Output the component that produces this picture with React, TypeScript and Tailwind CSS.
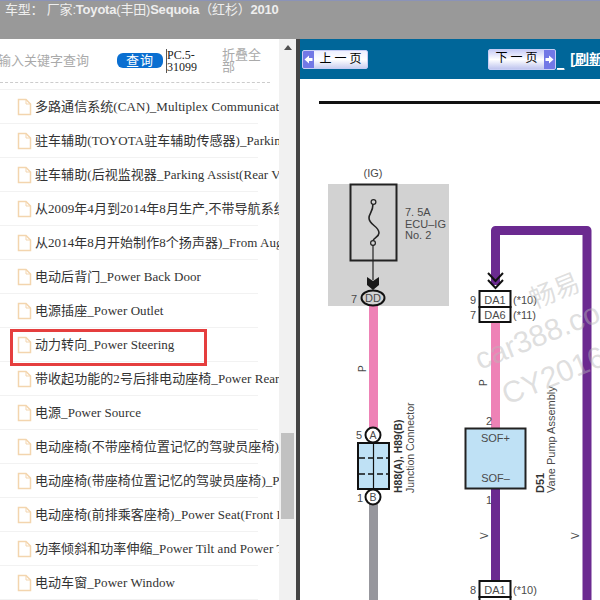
const rows = [
  '多路通信系统(CAN)_Multiplex Communication System',
  '驻车辅助(TOYOTA驻车辅助传感器)_Parking Assist Sensor',
  '驻车辅助(后视监视器_Parking Assist(Rear View Monitor)',
  '从2009年4月到2014年8月生产,不带导航系统的车型',
  '从2014年8月开始制作8个扬声器)_From Aug. 2014',
  '电动后背门_Power Back Door',
  '电源插座_Power Outlet',
  '动力转向_Power Steering',
  '带收起功能的2号后排电动座椅_Power Rear Seat',
  '电源_Power Source',
  '电动座椅(不带座椅位置记忆的驾驶员座椅)_Power Seat',
  '电动座椅(带座椅位置记忆的驾驶员座椅)_Power Seat',
  '电动座椅(前排乘客座椅)_Power Seat(Front Passenger)',
  '功率倾斜和功率伸缩_Power Tilt and Power Telescopic',
  '电动车窗_Power Window',
];

function FileIcon() {
  return (
    <svg width="15" height="18" viewBox="0 0 15 18" className="shrink-0">
      <path d="M1.5 1.5H9L13.5 6V16.5H1.5Z" fill="#fff" stroke="#f3d5ae" strokeWidth="1.5" />
      <path d="M9 1.5V6H13.5" fill="none" stroke="#f3d5ae" strokeWidth="1" />
    </svg>
  );
}

function PageButton({ label, next }: { label: string; next?: boolean }) {
  const arrow = (
    <span className="flex w-[11px] shrink-0 items-center justify-center self-stretch bg-[#7278e6]">
      <svg width="9" height="9" viewBox="0 0 9 9">
        <path d={next ? 'M0.5 3H4V0.5L8.5 4.5L4 8.5V6H0.5Z' : 'M8.5 3H5V0.5L0.5 4.5L5 8.5V6H8.5Z'} fill="#fff" />
      </svg>
    </span>
  );
  return (
    <div className={next ? 'flex h-[21px] w-[68px] shrink-0 overflow-hidden rounded-[2px] border border-[#c6cdf5] bg-gradient-to-b from-[#c9cdf6] via-white to-[#bfc4ee]' : 'flex h-[19px] w-[66px] shrink-0 overflow-hidden rounded-[2px] border border-[#c6cdf5] bg-gradient-to-b from-[#eef0ff] via-white to-[#ccd0f0]'}>
      {!next && arrow}
      <span className="flex-1 pl-[3px] text-center text-[12px] leading-[17px] tracking-[3px] whitespace-nowrap text-black">{label}</span>
      {next && arrow}
    </div>
  );
}

function Diagram() {
  const label = { fontFamily: '"Liberation Sans", sans-serif', fill: '#4a4a4a' };
  return (
    <svg viewBox="300 79 300 521" width="300" height="521" className="block" style={label}>
      <rect x="319" y="101" width="281" height="3" fill="#111" />

      <rect x="328" y="184" width="121" height="122" fill="#d2d2d2" />
      <text x="373" y="177" fontSize="11" textAnchor="middle">(IG)</text>
      <rect x="350.5" y="184.5" width="46" height="76" fill="none" stroke="#222" strokeWidth="2" />
      <path d="M373 204C373 212 369 213 369 218C369 225 379 226 379 233C379 237 373 238 373 241" fill="none" stroke="#222" strokeWidth="1.6" />
      <circle cx="373.5" cy="202" r="2.4" fill="#d2d2d2" stroke="#222" strokeWidth="1.2" />
      <circle cx="373" cy="243" r="2.4" fill="#d2d2d2" stroke="#222" strokeWidth="1.2" />
      <path d="M373 245V280" stroke="#222" strokeWidth="1.2" />
      <path d="M367 277L373 281L379 277V285L373 290L367 285Z" fill="#1a1a1a" />
      <text x="405" y="216" fontSize="11">7. 5A</text>
      <text x="405" y="227.5" fontSize="11">ECU–IG</text>
      <text x="405" y="239" fontSize="11">No. 2</text>
      <text x="351" y="303" fontSize="11">7</text>

      <rect x="369" y="306" width="9" height="122" fill="#ee82b6" />
      <ellipse cx="373" cy="298" rx="11.5" ry="7.5" fill="#d2d2d2" stroke="#111" strokeWidth="2" />
      <text x="373" y="302" fontSize="11" textAnchor="middle">DD</text>
      <text transform="translate(366 372) rotate(-90)" fontSize="10">P</text>

      <rect x="369" y="500" width="9" height="100" fill="#97979d" />
      <rect x="358" y="443" width="31" height="46" fill="#bfe1f5" stroke="#111" strokeWidth="2" />
      <path d="M373.5 443V489" stroke="#111" strokeWidth="1.2" />
      <path d="M359 458H388M359 474H388" stroke="#111" strokeWidth="1.6" strokeDasharray="6 3" />
      <circle cx="373" cy="435" r="7.5" fill="#fff" stroke="#111" strokeWidth="2" />
      <circle cx="373" cy="497" r="7.5" fill="#fff" stroke="#111" strokeWidth="2" />
      <text x="373" y="439" fontSize="10.5" textAnchor="middle">A</text>
      <text x="373" y="501" fontSize="10.5" textAnchor="middle">B</text>
      <text x="356" y="439" fontSize="11">5</text>
      <text x="357" y="502" fontSize="11">1</text>
      <text transform="translate(402 493) rotate(-90)" fontSize="10.5" fontWeight="700" fill="#333">H88(A), H89(B)</text>
      <text transform="translate(414 493) rotate(-90)" fontSize="10.5">Junction Connector</text>

      <path d="M495.5 285V230.5H587V600" fill="none" stroke="#6b2a90" strokeWidth="9" strokeLinejoin="round" />
      <rect x="491" y="322" width="9" height="106" fill="#ee82b6" />
      <path d="M488 273L495.5 281L503 273M488 280L495.5 288L503 280" fill="none" stroke="#111" strokeWidth="2" />
      <rect x="479.5" y="291" width="31" height="16" fill="#fff" stroke="#111" strokeWidth="2" />
      <rect x="479.5" y="307" width="31" height="15" fill="#fff" stroke="#111" strokeWidth="2" />
      <text x="495" y="303.5" fontSize="11" textAnchor="middle">DA1</text>
      <text x="495" y="319" fontSize="11" textAnchor="middle">DA6</text>
      <text x="470" y="303.5" fontSize="11">9</text>
      <text x="470" y="319" fontSize="11">7</text>
      <text x="513" y="303.5" fontSize="11">(*10)</text>
      <text x="513" y="319" fontSize="11">(*11)</text>
      <text transform="translate(487 386) rotate(-90)" fontSize="10">P</text>
      <text x="486" y="425" fontSize="11">2</text>

      <rect x="491" y="489" width="9" height="92" fill="#6b2a90" />
      <rect x="465.5" y="428.5" width="60" height="60" fill="#bfe1f5" stroke="#222" strokeWidth="2" />
      <text x="495.5" y="442" fontSize="11" textAnchor="middle">SOF+</text>
      <text x="495.5" y="482" fontSize="11" textAnchor="middle">SOF–</text>
      <text x="486" y="504" fontSize="11">1</text>
      <text transform="translate(544 493) rotate(-90)" fontSize="11" fontWeight="700" fill="#333">D51</text>
      <text transform="translate(555 493) rotate(-90)" fontSize="11">Vane Pump Assembly</text>
      <text transform="translate(488 539) rotate(-90)" fontSize="10">V</text>
      <text transform="translate(579 539) rotate(-90)" fontSize="10">V</text>

      <rect x="479.5" y="581" width="31" height="16" fill="#fff" stroke="#111" strokeWidth="2" />
      <rect x="479.5" y="597" width="31" height="15" fill="#fff" stroke="#111" strokeWidth="2" />
      <text x="495" y="593.5" fontSize="11" textAnchor="middle">DA1</text>
      <text x="470" y="593.5" fontSize="11">8</text>
      <text x="513" y="593.5" fontSize="11">(*10)</text>
      <text x="464" y="608" fontSize="11">11</text>

      <g fill="#b8b8b8" fillOpacity="0.45" style={{ fontFamily: '"Liberation Sans", "Noto Sans CJK SC", sans-serif' }}>
        <text transform="translate(534 309) rotate(-22)" fontSize="26">畅易</text>
        <text transform="translate(480 370) rotate(-22)" fontSize="30">car388.co</text>
        <text transform="translate(507 405) rotate(-22)" fontSize="30">CY2016</text>
      </g>
    </svg>
  );
}

export default function App() {
  return (
    <div className="flex h-[600px] w-[600px] flex-col overflow-hidden bg-white font-[Liberation_Sans,Noto_Sans_CJK_SC,sans-serif]">
      <div className="h-[39px] shrink-0 border-t border-t-[#8b93b8] bg-[#999999] pl-[5px] text-[13px] leading-[17px] tracking-[-0.2px] whitespace-nowrap text-[#eeeeee]">
        车型： 厂家:<b>Toyota</b>(丰田)<b>Sequoia</b>（红杉）<b>2010</b>
      </div>

      <div className="flex min-h-0 flex-1">
        <div className="w-[279px] shrink-0 overflow-hidden">
          <div className="flex h-[44px] w-[270px] items-center border-b border-dashed border-b-[#cccccc]">
            <span className="ml-[-2px] w-[119px] shrink-0 text-[13px] whitespace-nowrap text-[#aaaaaa]">输入关键字查询</span>
            <span className="h-[15px] w-[46px] shrink-0 rounded-[6px] bg-[#0a6fd1] text-center text-[13px] leading-[15px] tracking-[1px] text-white">查询</span>
            <span className="ml-[3px] w-[38px] shrink-0 border-l border-l-[#555555] font-['Liberation_Serif','Noto_Sans_CJK_SC',serif] text-[12px] leading-[12px] text-[#222222]">PC.5-31099</span>
            <span className="ml-[18px] w-[42px] shrink-0 text-[13px] leading-[12px] text-[#aaaaaa]">折叠全部</span>
          </div>
          <div className="mt-[6px] w-[258px] border-t border-t-[#f2f2f2]">
            {rows.map((r) => (
              <div key={r} className="flex h-[34px] items-center gap-[3px] border-b border-b-[#f2f2f2] pt-[1px] pl-[17px] font-['Liberation_Serif','Noto_Sans_CJK_SC',serif] text-[13px] tracking-[0.06px] whitespace-nowrap text-[#333333]">
                <FileIcon />
                <span>{r}</span>
              </div>
            ))}
          </div>
        </div>

        <div className="w-[17px] shrink-0 bg-[#f1f1f1] px-[2px]">
          <div className="mx-auto mt-[6px] h-0 w-0 border-x-[4px] border-b-[5px] border-x-transparent border-b-[#505050]" />
          <div className="mt-[383px] h-[86px] bg-[#c1c1c1]" />
        </div>
        <div className="w-[4px] shrink-0 bg-[#444444]" />

        <div className="min-w-0 flex-1 overflow-hidden">
          <div className="flex h-[40px] items-center bg-[#006699] pl-[2px] whitespace-nowrap">
            <PageButton label="上一页" />
            <span className="ml-[120px] shrink-0"><PageButton label="下一页" next /></span>
            <span className="ml-[1px] shrink-0 self-end pb-[10px] text-[13px] leading-none text-white underline">_</span>
            <span className="ml-[6px] shrink-0 text-[14px] font-bold text-white underline">[刷新</span>
          </div>
          <Diagram />
        </div>
      </div>

      <div className="absolute top-[329px] left-[10px] h-[37px] w-[197px] border-[3px] border-[#e53e3e]" />
    </div>
  );
}
